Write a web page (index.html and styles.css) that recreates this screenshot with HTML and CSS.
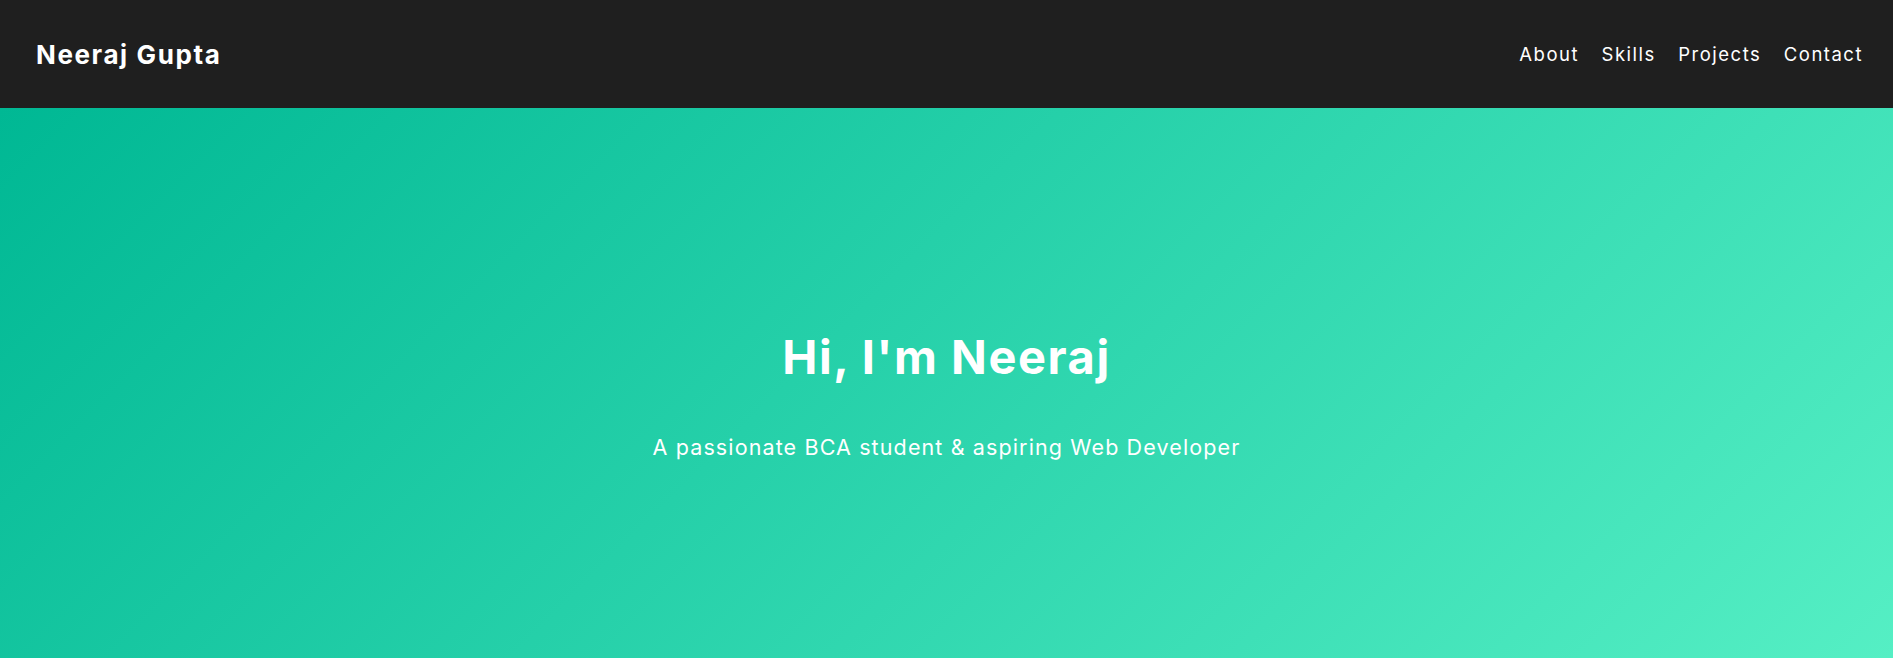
FILE: index.html
```html
<!DOCTYPE html>
<html lang="en">
<head>
<meta charset="UTF-8">
<title>Neeraj Gupta</title>
<link rel="stylesheet" href="styles.css">
</head>
<body>
<header class="site-header">
  <div class="logo">Neeraj Gupta</div>
  <nav class="nav">
    <a href="#about">About</a>
    <a href="#skills">Skills</a>
    <a href="#projects">Projects</a>
    <a href="#contact">Contact</a>
  </nav>
</header>
<section class="hero">
  <h1 class="hero-title">Hi, I'm Neeraj</h1>
  <p class="hero-sub">A passionate BCA student &amp; aspiring Web Developer</p>
</section>
</body>
</html>
```

FILE: styles.css
```css
* { box-sizing: border-box; }
html, body { margin: 0; padding: 0; }
body {
  font-family: Inter, "Open Sans", sans-serif;
  color: #fff;
  background: #1f1f1f;
  overflow: hidden;
}
.site-header {
  height: 108px;
  padding: 0 30px 0 36px;
  display: flex;
  align-items: center;
  justify-content: space-between;
  background: #1f1f1f;
}
.logo {
  font-size: 26px;
  font-weight: 700;
  letter-spacing: 1.6px;
}
.nav {
  display: flex;
  gap: 22.5px;
}
.nav a {
  color: #fff;
  text-decoration: none;
  font-size: 18.5px;
  letter-spacing: 1.5px;
}
.hero {
  height: 550px;
  background: linear-gradient(135deg, #00b894, #55efc4);
  display: flex;
  flex-direction: column;
  align-items: center;
  justify-content: center;
  text-align: center;
  padding-top: 23px;
}
.hero-title {
  margin: 0;
  font-size: 47px;
  line-height: 56px;
  font-weight: 700;
  letter-spacing: 1.55px;
}
.hero-sub {
  margin: 49px 0 0;
  font-size: 21.5px;
  line-height: 26px;
  letter-spacing: 1.12px;
}
```
